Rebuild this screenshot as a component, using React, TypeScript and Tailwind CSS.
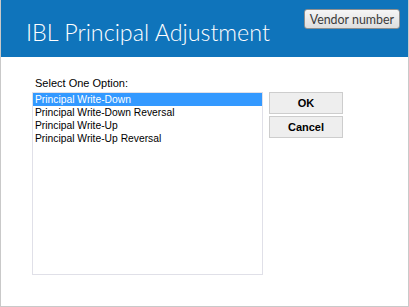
import { useState } from "react";

const options = [
  "Principal Write-Down",
  "Principal Write-Down Reversal",
  "Principal Write-Up",
  "Principal Write-Up Reversal"
];

export default function App() {
  const [selected, setSelected] = useState(0);

  return (
    <div className="flex h-[307px] w-[409px] flex-col overflow-hidden border-x border-b border-[#c9c9c9] bg-white">
      <header className="relative h-[57px] shrink-0 bg-[#0f74bb]">
        <h1 className="pl-[25px] pt-[17px] text-[23.3px] font-light leading-[30px] text-white [font-family:Lato,sans-serif]">
          IBL Principal Adjustment
        </h1>
        <button
          className="absolute right-[8px] top-[9px] h-[20px] rounded-[3px] border border-[#8e8f8f] bg-gradient-to-b from-[#f6f6f6] to-[#dedede] px-[5px] text-[12.4px] leading-[17px] text-[#3b3b3b] [font-family:Lato,sans-serif]"
          type="button"
        >
          Vendor number
        </button>
      </header>
      <div className="flex flex-1 gap-[6px] pl-[31px] pt-[20px] text-[11px] text-black [font-family:'Liberation_Sans',sans-serif]">
        <div className="flex w-[231px] flex-col gap-[2px]">
          <label className="pl-[3px] leading-[13px]">Select One Option:</label>
          <div className="h-[183px] border border-[#e0e0e8] bg-white text-[10.3px]">
            {options.map((option, index) => (
              <div
                className={
                  index === selected
                    ? "cursor-default bg-[#3399ff] pl-[2px] leading-[13px] text-white"
                    : "cursor-default pl-[2px] leading-[13px]"
                }
                key={option}
                onClick={() => setSelected(index)}
              >
                {option}
              </div>
            ))}
          </div>
        </div>
        <div className="flex flex-col gap-[2px] pt-[15px]">
          <button className="h-[22px] w-[74px] border border-[#cdcdcd] bg-[#eeeeee] text-[11px] font-bold" type="button">
            OK
          </button>
          <button className="h-[22px] w-[74px] border border-[#cdcdcd] bg-[#eeeeee] text-[11px] font-bold" type="button">
            Cancel
          </button>
        </div>
      </div>
    </div>
  );
}
